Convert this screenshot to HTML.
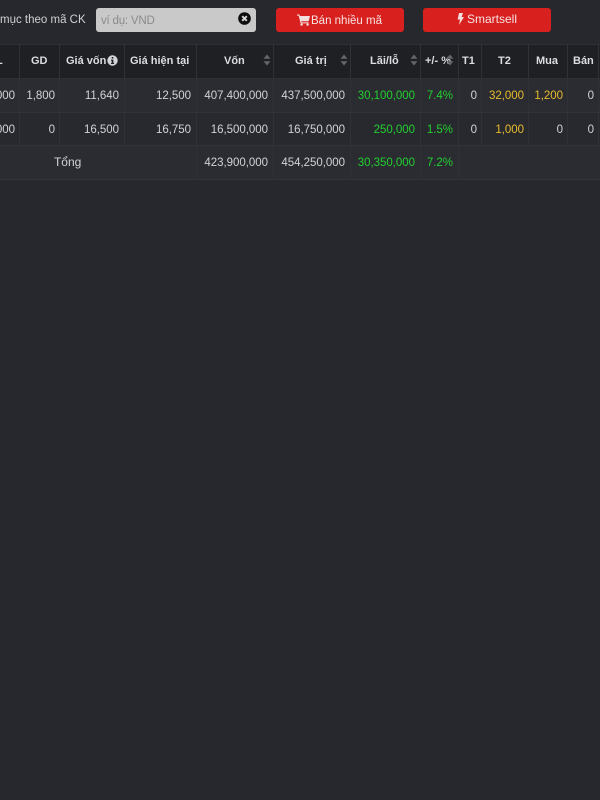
<!DOCTYPE html>
<html lang="vi">
<head>
<meta charset="utf-8">
<style>
html,body{margin:0;padding:0;width:600px;height:800px;overflow:hidden;background:#27282d;}
body{position:relative;font-family:"Liberation Sans","Noto Sans CJK SC",sans-serif;font-size:11.5px;color:#d2d3d5;filter:blur(.3px);}
.a{position:absolute;white-space:nowrap;}
.band{position:absolute;left:0;width:600px;}
.v{position:absolute;width:1px;background:#303136;}
.h{position:absolute;left:0;width:600px;height:1px;background:#323338;}
.th{position:absolute;top:45px;height:34px;line-height:33px;font-weight:bold;color:#dcdde0;font-size:11px;white-space:nowrap;}
.c{position:absolute;height:14px;line-height:14px;text-align:right;white-space:nowrap;letter-spacing:-.03px;}
.g{color:#22cf30;}
.y{color:#e8bb2e;}
.btn{position:absolute;top:8px;height:24px;background:#d8201f;border-radius:3px;color:#f6e2e1;line-height:23px;font-size:11.5px;white-space:nowrap;}
</style>
</head>
<body>

<div class="band" style="top:44px;height:34px;background:#1f2024"></div>
<div class="band" style="top:78px;height:34px;background:#2b2c31"></div>
<div class="band" style="top:112px;height:33px;background:#28292e"></div>
<div class="band" style="top:145px;height:34px;background:#2b2c31"></div>

<div class="h" style="top:44px;background:#2f3035"></div>
<div class="h" style="top:78px;background:#2f3035"></div>
<div class="h" style="top:112px"></div>
<div class="h" style="top:145px"></div>
<div class="h" style="top:179px"></div>

<div class="v" style="left:19px;top:44px;height:101px"></div>
<div class="v" style="left:59px;top:44px;height:101px"></div>
<div class="v" style="left:124px;top:44px;height:101px"></div>
<div class="v" style="left:196px;top:44px;height:135px"></div>
<div class="v" style="left:273px;top:44px;height:135px"></div>
<div class="v" style="left:350px;top:44px;height:135px"></div>
<div class="v" style="left:420px;top:44px;height:135px"></div>
<div class="v" style="left:458px;top:44px;height:135px"></div>
<div class="v" style="left:481px;top:44px;height:101px"></div>
<div class="v" style="left:528px;top:44px;height:101px"></div>
<div class="v" style="left:567px;top:44px;height:101px"></div>
<div class="v" style="left:598px;top:44px;height:101px"></div>

<div class="a" style="left:0;top:13px;line-height:14px;font-size:11.5px;color:#cfd0d2">mục theo mã CK</div>
<div class="a" style="left:96px;top:8px;width:160px;height:24px;background:#c9c9c9;border-radius:3px"></div>
<div class="a" style="left:101px;top:14px;line-height:14px;font-size:11.5px;color:#8b8b8b;letter-spacing:-.2px">ví dụ: VND</div>
<svg class="a" style="left:238px;top:12px" width="13" height="13" viewBox="0 0 13 13"><circle cx="6.5" cy="6.5" r="6.3" fill="#0c0c0c"/><path d="M4.2 4.2L8.8 8.8M8.8 4.2L4.2 8.8" stroke="#d5d5d5" stroke-width="2"/></svg>

<div class="btn" style="left:276px;width:128px">
  <svg class="a" style="left:21px;top:6px" width="13" height="12" viewBox="0 0 13 12"><path d="M0 0.5H2.4L2.9 2H13L11.6 7.2H4.2L4.5 8.4H11.6V9.4H3.6L1.7 1.6H0Z" fill="#f2dedd"/><circle cx="4.6" cy="10.6" r="1.2" fill="#f2dedd"/><circle cx="10.6" cy="10.6" r="1.2" fill="#f2dedd"/></svg>
  <span class="a" style="left:35px;top:2px">Bán nhiều mã</span>
</div>
<div class="btn" style="left:423px;width:128px">
  <svg class="a" style="left:34px;top:5px" width="7" height="12" viewBox="0 0 7 12"><path d="M2 0H6L4.6 4H7L2 12L3 6.5H0.6Z" fill="#f2dedd"/></svg>
  <span class="a" style="left:44px;top:0;font-size:12px">Smartsell</span>
</div>

<div class="th" style="left:0;width:3px;overflow:hidden"><span style="margin-left:-4px">L</span></div>
<div class="th" style="left:31px">GD</div>
<div class="th" style="left:66px">Giá vốn</div>
<svg class="a" style="left:107px;top:55px" width="11" height="11" viewBox="0 0 11 11"><circle cx="5.5" cy="5.5" r="5.2" fill="#d4d5d7"/><rect x="4.7" y="2" width="1.7" height="1.6" fill="#1f2024"/><path d="M4 4.6H6.4V7.9H7.1V9H4V7.9H4.7V5.7H4Z" fill="#1f2024"/></svg>
<div class="th" style="left:130px">Giá hiện tại</div>
<div class="th" style="left:224px">Vốn</div>
<div class="th" style="left:295px">Giá trị</div>
<div class="th" style="left:370px">Lãi/lỗ</div>
<div class="th" style="left:425px">+/- %</div>
<div class="th" style="left:462px">T1</div>
<div class="th" style="left:498px">T2</div>
<div class="th" style="left:536px">Mua</div>
<div class="th" style="left:573px">Bán</div>

<svg class="a" style="left:263px;top:54px" width="8" height="12" viewBox="0 0 8 12"><path d="M4 0.5L7.5 4.8H0.5Z M4 11.5L0.5 7.2H7.5Z" fill="#65666b"/></svg>
<svg class="a" style="left:340px;top:54px" width="8" height="12" viewBox="0 0 8 12"><path d="M4 0.5L7.5 4.8H0.5Z M4 11.5L0.5 7.2H7.5Z" fill="#65666b"/></svg>
<svg class="a" style="left:410px;top:54px" width="8" height="12" viewBox="0 0 8 12"><path d="M4 0.5L7.5 4.8H0.5Z M4 11.5L0.5 7.2H7.5Z" fill="#65666b"/></svg>
<svg class="a" style="left:446px;top:54px" width="8" height="12" viewBox="0 0 8 12"><path d="M4 0.5L7.5 4.8H0.5Z M4 11.5L0.5 7.2H7.5Z" fill="#65666b"/></svg>

<!-- Row 1 -->
<div class="c" style="top:89px;right:585px">000</div>
<div class="c" style="top:89px;right:545px">1,800</div>
<div class="c" style="top:89px;right:481px">11,640</div>
<div class="c" style="top:89px;right:409px">12,500</div>
<div class="c" style="top:89px;right:332px">407,400,000</div>
<div class="c" style="top:89px;right:255px">437,500,000</div>
<div class="c g" style="top:89px;right:185px">30,100,000</div>
<div class="c g" style="top:89px;right:147px">7.4%</div>
<div class="c" style="top:89px;right:123px">0</div>
<div class="c y" style="top:89px;right:76px">32,000</div>
<div class="c y" style="top:89px;right:37px">1,200</div>
<div class="c" style="top:89px;right:6px">0</div>

<!-- Row 2 -->
<div class="c" style="top:123px;right:585px">000</div>
<div class="c" style="top:123px;right:545px">0</div>
<div class="c" style="top:123px;right:481px">16,500</div>
<div class="c" style="top:123px;right:409px">16,750</div>
<div class="c" style="top:123px;right:332px">16,500,000</div>
<div class="c" style="top:123px;right:255px">16,750,000</div>
<div class="c g" style="top:123px;right:185px">250,000</div>
<div class="c g" style="top:123px;right:147px">1.5%</div>
<div class="c" style="top:123px;right:123px">0</div>
<div class="c y" style="top:123px;right:76px">1,000</div>
<div class="c" style="top:123px;right:37px">0</div>
<div class="c" style="top:123px;right:6px">0</div>

<!-- Total -->
<div class="c" style="top:155px;left:54px;font-size:12px">Tổng</div>
<div class="c" style="top:156px;right:332px">423,900,000</div>
<div class="c" style="top:156px;right:255px">454,250,000</div>
<div class="c g" style="top:156px;right:185px">30,350,000</div>
<div class="c g" style="top:156px;right:147px">7.2%</div>

</body>
</html>
